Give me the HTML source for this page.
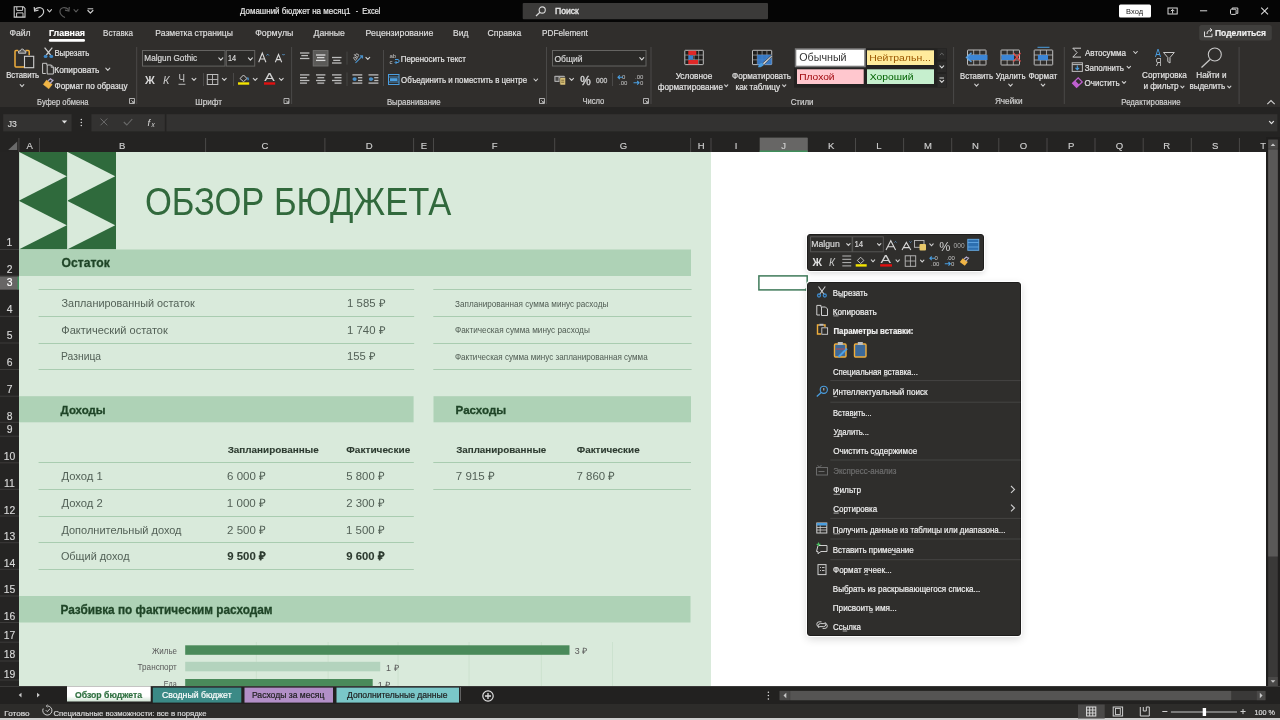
<!DOCTYPE html>
<html><head><meta charset="utf-8"><title>Excel</title>
<style>
*{margin:0;padding:0;box-sizing:border-box}
html,body{width:1280px;height:720px;overflow:hidden;background:#2f2e2d;font-family:"Liberation Sans",sans-serif}
.a{position:absolute}
svg.txt,svg.ic{position:absolute;left:0;top:0}
svg.txt,svg.ic{will-change:transform}
svg text{font-family:"Liberation Sans",sans-serif}
</style></head><body>
<div class="a" style="left:0;top:0;width:1280px;height:22px;background:#050505"></div>
<div class="a" style="left:0;top:22px;width:1280px;height:85px;background:#302e2c"></div>
<div class="a" style="left:0;top:107px;width:1280px;height:30px;background:#242322"></div>
<div class="a" style="left:0;top:137px;width:1280px;height:15px;background:#242322"></div>
<div class="a" style="left:0;top:152px;width:19px;height:534px;background:#252423"></div>
<div class="a" style="left:19px;top:152px;width:1247px;height:534px;background:#ffffff"></div>
<div class="a" style="left:19px;top:152px;width:692px;height:534px;background:#d9eadb"></div>
<div class="a" style="left:1266px;top:137px;width:14px;height:549px;background:#1f1e1d"></div>
<div class="a" style="left:0;top:686px;width:1280px;height:18px;background:#222120;border-top:1px solid #3a3938"></div>
<div class="a" style="left:0;top:704px;width:1280px;height:14px;background:#2d2c2a"></div>
<div class="a" style="left:0;top:718px;width:1280px;height:2px;background:#cfcfcf"></div>
<svg class="ic" width="1280" height="720" viewBox="0 0 1280 720">
<path d="M14.2,6.8 h9.2 l1.6,1.6 v8.7 h-10.8 z" stroke="#cdcdcd" fill="none" stroke-width="1.1" />
<path d="M16.8,6.8 v3.6 h5.8 v-3.6" stroke="#cdcdcd" fill="none" stroke-width="1" />
<path d="M16.6,17.1 v-4.2 h6.4 v4.2" stroke="#cdcdcd" fill="none" stroke-width="1" />
<path d="M35,9.5 C38,6.5 44,7 43.6,12.2 C43.3,15 40.5,16.5 38.5,17.5" stroke="#cdcdcd" fill="none" stroke-width="1.2" />
<path d="M34.2,7 L34.6,11 L38.5,10.2" stroke="#cdcdcd" fill="none" stroke-width="1.2" />
<path d="M47.5,9.700000000000001 L49.5,11.9 L51.5,9.700000000000001" stroke="#cdcdcd" fill="none" stroke-width="1.1" stroke-linecap="round" stroke-linejoin="round"/>
<path d="M68.5,9.5 C65.5,6.5 59.5,7 60,12.2 C60.3,15 63,16.5 65,17.5" stroke="#5a5a5a" fill="none" stroke-width="1.2" />
<path d="M69.3,7 L68.9,11 L65,10.2" stroke="#5a5a5a" fill="none" stroke-width="1.2" />
<path d="M74.0,9.700000000000001 L76,11.9 L78.0,9.700000000000001" stroke="#5a5a5a" fill="none" stroke-width="1.1" stroke-linecap="round" stroke-linejoin="round"/>
<line x1="87.6" y1="8.8" x2="93.2" y2="8.8" stroke="#cdcdcd" stroke-width="1" />
<path d="M87.9,10.5 L90.4,13.100000000000001 L92.9,10.5" stroke="#cdcdcd" fill="none" stroke-width="1.2" stroke-linecap="round" stroke-linejoin="round"/>
<rect x="522.7" y="3" width="245.3" height="16.3" fill="#3b3a39" rx="1"/>
<circle cx="542.2" cy="10" r="3.1" stroke="#d8d8d8" stroke-width="1.1" fill="none"/>
<line x1="540" y1="12.3" x2="536" y2="16" stroke="#d8d8d8" stroke-width="1.2" />
<rect x="1119" y="4.5" width="32" height="13.1" fill="#ffffff" rx="1.5"/>
<rect x="1168" y="8" width="9.2" height="6" fill="none" stroke="#d8d8d8" stroke-width="1"/>
<path d="M1172.6,13.5 v-3.8 M1170.8,11.2 l1.8,-1.8 l1.8,1.8" stroke="#d8d8d8" fill="none" stroke-width="1" />
<line x1="1200" y1="10.8" x2="1207.2" y2="10.8" stroke="#d8d8d8" stroke-width="1" />
<rect x="1230.5" y="9.2" width="5.6" height="5.2" fill="none" stroke="#d8d8d8" stroke-width="1" rx="1"/>
<path d="M1232.2,9 v-1 h5.6 v5.4 h-1.4" stroke="#d8d8d8" fill="none" stroke-width="1" />
<path d="M1261.2,7.7 L1268,14.3 M1268,7.7 L1261.2,14.3" stroke="#d8d8d8" fill="none" stroke-width="1.1" />
<rect x="48.8" y="39.1" width="36.2" height="2.6" fill="#ffffff" rx="1.3"/>
<line x1="136.7" y1="47" x2="136.7" y2="104" stroke="#4a4948" stroke-width="1" />
<line x1="291.6" y1="47" x2="291.6" y2="104" stroke="#4a4948" stroke-width="1" />
<line x1="546.5" y1="47" x2="546.5" y2="104" stroke="#4a4948" stroke-width="1" />
<line x1="651" y1="47" x2="651" y2="104" stroke="#4a4948" stroke-width="1" />
<line x1="953.6" y1="47" x2="953.6" y2="104" stroke="#4a4948" stroke-width="1" />
<line x1="1064.3" y1="47" x2="1064.3" y2="104" stroke="#4a4948" stroke-width="1" />
<line x1="1239.1" y1="47" x2="1239.1" y2="104" stroke="#4a4948" stroke-width="1" />
<line x1="203.5" y1="73" x2="203.5" y2="86" stroke="#4a4948" stroke-width="1" />
<line x1="233.5" y1="73" x2="233.5" y2="86" stroke="#4a4948" stroke-width="1" />
<line x1="383.5" y1="50" x2="383.5" y2="86" stroke="#4a4948" stroke-width="1" />
<line x1="612.5" y1="73" x2="612.5" y2="86" stroke="#4a4948" stroke-width="1" />
<path d="M129.5,98.5 h5 v5 h-5 z" stroke="#bdbdbd" fill="none" stroke-width="0.9" />
<path d="M131.3,100.3 l2.6,2.6 M133.9,100.8 v2.1 h-2.1" stroke="#bdbdbd" fill="none" stroke-width="0.9" />
<path d="M284,98.5 h5 v5 h-5 z" stroke="#bdbdbd" fill="none" stroke-width="0.9" />
<path d="M285.8,100.3 l2.6,2.6 M288.4,100.8 v2.1 h-2.1" stroke="#bdbdbd" fill="none" stroke-width="0.9" />
<path d="M539.5,98.5 h5 v5 h-5 z" stroke="#bdbdbd" fill="none" stroke-width="0.9" />
<path d="M541.3,100.3 l2.6,2.6 M543.9,100.8 v2.1 h-2.1" stroke="#bdbdbd" fill="none" stroke-width="0.9" />
<path d="M643.5,98.5 h5 v5 h-5 z" stroke="#bdbdbd" fill="none" stroke-width="0.9" />
<path d="M645.3,100.3 l2.6,2.6 M647.9,100.8 v2.1 h-2.1" stroke="#bdbdbd" fill="none" stroke-width="0.9" />
<rect x="1199.2" y="25" width="72.6" height="15.6" fill="#403f3d" rx="2.5"/>
<path d="M1204.5,31.5 v5.2 h7.5 v-3" stroke="#e0e0e0" fill="none" stroke-width="1" />
<path d="M1207,34 C1207,31 1209,30 1211.5,30 M1210,28.3 l2,1.7 l-2,1.8" stroke="#e0e0e0" fill="none" stroke-width="1" />
<path d="M1267.3,104.2 L1271,100.5 L1274.7,104.2" stroke="#d0d0d0" fill="none" stroke-width="1.1" />
<path d="M18.2,50.6 h-2.2 a1,1 0 0,0 -1,1 v14.3 a1,1 0 0,0 1,1 h8.4" stroke="#f0ae3c" fill="none" stroke-width="1.5" />
<path d="M25.6,50.6 h2.6 a1,1 0 0,1 1,1 v3.6" stroke="#f0ae3c" fill="none" stroke-width="1.5" />
<path d="M18.6,53.2 v-2.2 h1.8 C20.6,48.4 24,48.4 24.2,51 h1.6 v2.2 z" stroke="#c8c8c8" fill="#5a5958" stroke-width="1" />
<rect x="24.5" y="56.3" width="9.2" height="11.4" fill="#2a2928" stroke="#cfcfcf" stroke-width="1.1"/>
<path d="M20.2,84.6 L22,86.6 L23.8,84.6" stroke="#cdcdcd" fill="none" stroke-width="1.1" stroke-linecap="round" stroke-linejoin="round"/>
<path d="M44.6,47.6 L50.6,55 M52.3,47.6 L46.3,55" stroke="#cfcfcf" fill="none" stroke-width="1.2" />
<ellipse cx="45.6" cy="56.4" rx="1.9" ry="1.6" fill="#3c86c6"/>
<ellipse cx="51.3" cy="56.4" rx="1.9" ry="1.6" fill="#3c86c6"/>
<path d="M45.8,73.5 h-3.2 v-10.2 h4.2 v1.8" stroke="#c8c8c8" fill="none" stroke-width="1" />
<path d="M47.2,65 h4.2 l2,2 v7 h-6.2 z" stroke="#c8c8c8" fill="none" stroke-width="1" />
<path d="M51.2,65 v2.3 h2.2" stroke="#c8c8c8" fill="none" stroke-width="0.9" />
<path d="M105.8,68.2 L107.8,70.39999999999999 L109.8,68.2" stroke="#cdcdcd" fill="none" stroke-width="1.1" stroke-linecap="round" stroke-linejoin="round"/>
<path d="M43.3,84.5 l5.5,4.3 l3.4,-4.3 l-5.6,-4.4 z" stroke="#f0b545" fill="#f0b545" stroke-width="0.5" />
<path d="M48,80.8 l2.5,-2 l1.8,1.4 M50,83.5 l3.4,-3.6" stroke="#b8b0d0" fill="none" stroke-width="1.2" />
<rect x="142.5" y="50.5" width="82.5" height="15.6" fill="#2b2a28" stroke="#656462" stroke-width="1"/>
<path d="M218.8,57.9 L220.8,60.1 L222.8,57.9" stroke="#d8d8d8" fill="none" stroke-width="1.1" stroke-linecap="round" stroke-linejoin="round"/>
<rect x="226.3" y="50.5" width="28.4" height="15.6" fill="#2b2a28" stroke="#656462" stroke-width="1"/>
<path d="M248.4,57.9 L250.4,60.1 L252.4,57.9" stroke="#d8d8d8" fill="none" stroke-width="1.1" stroke-linecap="round" stroke-linejoin="round"/>
<path d="M258.7,62.2 L262.3,53 L265.9,62.2 M260,59 h4.6" stroke="#d8d8d8" fill="none" stroke-width="1.1" />
<path d="M266.5,55.5 l1.2,-1.3 l1.2,1.3" stroke="#5a9fd8" fill="none" stroke-width="0.9" />
<path d="M275.3,62.2 L278.5,54.5 L281.7,62.2 M276.5,59.6 h4" stroke="#d8d8d8" fill="none" stroke-width="1.1" />
<path d="M282.4,54 l1.1,1.2 l1.1,-1.2" stroke="#5a9fd8" fill="none" stroke-width="0.9" />
<path d="M192.1,78.3 L194,80.3 L195.9,78.3" stroke="#d0d0d0" fill="none" stroke-width="1.1" stroke-linecap="round" stroke-linejoin="round"/>
<rect x="207.3" y="74.5" width="10.5" height="10" fill="none" stroke="#bdbdbd" stroke-width="1"/>
<line x1="212.5" y1="74.5" x2="212.5" y2="84.5" stroke="#bdbdbd" stroke-width="0.9" />
<line x1="207.3" y1="79.5" x2="217.8" y2="79.5" stroke="#bdbdbd" stroke-width="0.9" />
<path d="M222.4,78.3 L224.3,80.3 L226.20000000000002,78.3" stroke="#d0d0d0" fill="none" stroke-width="1.1" stroke-linecap="round" stroke-linejoin="round"/>
<path d="M240,78.5 l3.5,-3.5 l3.5,3.5 l-3.5,3.2 z" stroke="#d0d0d0" fill="none" stroke-width="1" />
<path d="M247.5,77.5 c1,1.2 1,2.3 0,2.5" stroke="#4a9ee0" fill="none" stroke-width="1.2" />
<rect x="238" y="82.3" width="11.2" height="2.4" fill="#f4e400" />
<path d="M253.29999999999998,78.3 L255.2,80.3 L257.09999999999997,78.3" stroke="#d0d0d0" fill="none" stroke-width="1.1" stroke-linecap="round" stroke-linejoin="round"/>
<rect x="264" y="82.3" width="11.2" height="2.4" fill="#e01010" />
<path d="M279.40000000000003,78.3 L281.3,80.3 L283.2,78.3" stroke="#d0d0d0" fill="none" stroke-width="1.1" stroke-linecap="round" stroke-linejoin="round"/>
<line x1="300" y1="53" x2="309.4" y2="53" stroke="#bdbdbd" stroke-width="1.3" />
<line x1="301.3" y1="55.6" x2="308" y2="55.6" stroke="#bdbdbd" stroke-width="1.3" />
<line x1="300" y1="58.5" x2="309.4" y2="58.5" stroke="#bdbdbd" stroke-width="1.3" />
<rect x="313.2" y="50.6" width="14.8" height="15.4" fill="#5b5a58" stroke="#727170" stroke-width="0.9"/>
<line x1="316" y1="55" x2="325.4" y2="55" stroke="#d8d8d8" stroke-width="1.3" />
<line x1="317" y1="57.6" x2="324.4" y2="57.6" stroke="#d8d8d8" stroke-width="1.3" />
<line x1="316" y1="60.4" x2="325.4" y2="60.4" stroke="#d8d8d8" stroke-width="1.3" />
<line x1="332" y1="57.5" x2="341.5" y2="57.5" stroke="#bdbdbd" stroke-width="1.3" />
<line x1="333.2" y1="60.4" x2="340.3" y2="60.4" stroke="#bdbdbd" stroke-width="1.3" />
<line x1="332" y1="63" x2="341.5" y2="63" stroke="#bdbdbd" stroke-width="1.3" />
<line x1="347" y1="51.6" x2="347" y2="64.7" stroke="#454443" stroke-width="1" />
<line x1="347" y1="72.4" x2="347" y2="86" stroke="#454443" stroke-width="1" />
<text x="352.5" y="59.5" font-size="6.8" fill="#d0d0d0" transform="rotate(-55 355.5 57.5)">ab</text>
<path d="M355.5,62.8 L362.5,55.8 M359.8,55.8 h2.7 v2.7" stroke="#4a90c8" fill="none" stroke-width="1.2" />
<path d="M365.90000000000003,57.4 L367.8,59.4 L369.7,57.4" stroke="#d0d0d0" fill="none" stroke-width="1.1" stroke-linecap="round" stroke-linejoin="round"/>
<line x1="300" y1="74.9" x2="309.4" y2="74.9" stroke="#bdbdbd" stroke-width="1.3" />
<line x1="300" y1="77.7" x2="307" y2="77.7" stroke="#bdbdbd" stroke-width="1.3" />
<line x1="300" y1="80.5" x2="309.4" y2="80.5" stroke="#bdbdbd" stroke-width="1.3" />
<line x1="300" y1="83.1" x2="307" y2="83.1" stroke="#bdbdbd" stroke-width="1.3" />
<line x1="316" y1="74.9" x2="325.4" y2="74.9" stroke="#bdbdbd" stroke-width="1.3" />
<line x1="317.3" y1="77.7" x2="324.2" y2="77.7" stroke="#bdbdbd" stroke-width="1.3" />
<line x1="316" y1="80.5" x2="325.4" y2="80.5" stroke="#bdbdbd" stroke-width="1.3" />
<line x1="317.3" y1="83.1" x2="324.2" y2="83.1" stroke="#bdbdbd" stroke-width="1.3" />
<line x1="332" y1="74.9" x2="341.5" y2="74.9" stroke="#bdbdbd" stroke-width="1.3" />
<line x1="334.5" y1="77.7" x2="341.5" y2="77.7" stroke="#bdbdbd" stroke-width="1.3" />
<line x1="332" y1="80.5" x2="341.5" y2="80.5" stroke="#bdbdbd" stroke-width="1.3" />
<line x1="334.5" y1="83.1" x2="341.5" y2="83.1" stroke="#bdbdbd" stroke-width="1.3" />
<line x1="352.4" y1="74.9" x2="362.3" y2="74.9" stroke="#bdbdbd" stroke-width="1.3" />
<line x1="358" y1="77.7" x2="362.3" y2="77.7" stroke="#bdbdbd" stroke-width="1.3" />
<line x1="358" y1="80.5" x2="362.3" y2="80.5" stroke="#bdbdbd" stroke-width="1.3" />
<line x1="352.4" y1="83.1" x2="362.3" y2="83.1" stroke="#bdbdbd" stroke-width="1.3" />
<circle cx="354.8" cy="79.1" r="1.9" fill="#4a90c8"/>
<path d="M352.2,79.1 l2,-1.8 v3.6 z" stroke="none" fill="#4a90c8" stroke-width="1" />
<line x1="368.5" y1="74.9" x2="378.4" y2="74.9" stroke="#bdbdbd" stroke-width="1.3" />
<line x1="374.2" y1="77.7" x2="378.4" y2="77.7" stroke="#bdbdbd" stroke-width="1.3" />
<line x1="374.2" y1="80.5" x2="378.4" y2="80.5" stroke="#bdbdbd" stroke-width="1.3" />
<line x1="368.5" y1="83.1" x2="378.4" y2="83.1" stroke="#bdbdbd" stroke-width="1.3" />
<circle cx="370.8" cy="79.1" r="1.9" fill="#4a90c8"/>
<path d="M373.6,79.1 l-2,-1.8 v3.6 z" stroke="none" fill="#4a90c8" stroke-width="1" />
<text x="389.5" y="58" font-size="6" fill="#c8c8c8">ab</text>
<text x="389.5" y="63.5" font-size="6" fill="#c8c8c8">c</text>
<path d="M395,59.5 h3 c1.5,0 1.5,3 0,3 h-2.5 M396.5,61 l-1.5,1.5 l1.5,1.5" stroke="#4a9ee0" fill="none" stroke-width="1" />
<rect x="388.5" y="74.5" width="10.5" height="10" fill="none" stroke="#4a9ee0" stroke-width="1"/>
<line x1="388.5" y1="77" x2="399" y2="77" stroke="#4a9ee0" stroke-width="0.8" />
<line x1="388.5" y1="82" x2="399" y2="82" stroke="#4a9ee0" stroke-width="0.8" />
<rect x="390" y="78.2" width="7.5" height="2.8" fill="#4a9ee0" />
<path d="M534.0,79.0 L535.8,81.0 L537.5999999999999,79.0" stroke="#d0d0d0" fill="none" stroke-width="1.1" stroke-linecap="round" stroke-linejoin="round"/>
<rect x="552.5" y="50.5" width="93.5" height="15.5" fill="#2b2a28" stroke="#656462" stroke-width="1"/>
<path d="M639.8,57.699999999999996 L641.8,59.9 L643.8,57.699999999999996" stroke="#d8d8d8" fill="none" stroke-width="1.1" stroke-linecap="round" stroke-linejoin="round"/>
<rect x="554.3" y="75.8" width="10.5" height="6.2" fill="#a8a8a8" rx="0.8"/>
<rect x="555.5" y="77" width="3" height="3.8" fill="#4a4948" />
<rect x="559.8" y="77.5" width="5.8" height="7.6" fill="#d8c078" stroke="#302e2c" stroke-width="0.6" rx="1"/>
<line x1="561.2" y1="80.2" x2="564.2" y2="80.2" stroke="#5a4a20" stroke-width="0.7" />
<line x1="561.2" y1="82.2" x2="564.2" y2="82.2" stroke="#5a4a20" stroke-width="0.7" />
<path d="M569.7,78.3 L571.6,80.3 L573.5,78.3" stroke="#d0d0d0" fill="none" stroke-width="1.1" stroke-linecap="round" stroke-linejoin="round"/>
<text x="580.3" y="84.6" font-size="12.5" fill="#c8c8c8" stroke="#c8c8c8" stroke-width="0.5" textLength="10.5" lengthAdjust="spacingAndGlyphs">%</text>
<text x="596" y="82.6" font-size="8" fill="#b8b8b8" stroke="#b8b8b8" stroke-width="0.45" textLength="11.3" lengthAdjust="spacingAndGlyphs">000</text>
<text x="622" y="79" font-size="6" fill="#c8c8c8">0</text><text x="619" y="84.6" font-size="6" fill="#c8c8c8">.00</text>
<path d="M623,77.2 h-5 M619.8,75.4 l-1.8,1.8 l1.8,1.8" stroke="#4a9ee0" fill="none" stroke-width="1.1" />
<text x="635" y="79" font-size="6" fill="#c8c8c8">.00</text><text x="640" y="84.6" font-size="6" fill="#c8c8c8">0</text>
<path d="M633.5,82.8 h5.5 M637.2,81 l1.8,1.8 l-1.8,1.8" stroke="#4a9ee0" fill="none" stroke-width="1.1" />
<rect x="684.8" y="50.3" width="18.5" height="14.3" fill="#1e1d1c" stroke="#bdbdbd" stroke-width="1" rx="0.5"/>
<line x1="689.42" y1="50.3" x2="689.42" y2="64.6" stroke="#a8a8a8" stroke-width="0.7" />
<line x1="694.04" y1="50.3" x2="694.04" y2="64.6" stroke="#a8a8a8" stroke-width="0.7" />
<line x1="698.66" y1="50.3" x2="698.66" y2="64.6" stroke="#a8a8a8" stroke-width="0.7" />
<line x1="684.8" y1="55.06999999999999" x2="703.3" y2="55.06999999999999" stroke="#a8a8a8" stroke-width="0.7" />
<line x1="684.8" y1="59.839999999999996" x2="703.3" y2="59.839999999999996" stroke="#a8a8a8" stroke-width="0.7" />
<rect x="688.3" y="50.8" width="8" height="4.3" fill="#e02828" />
<rect x="688.3" y="55.4" width="4.7" height="4.3" fill="#3a80d0" />
<rect x="688.3" y="60" width="9.7" height="4.2" fill="#e02828" />
<rect x="752.5" y="50.3" width="19.2" height="14.3" fill="#1e1d1c" stroke="#bdbdbd" stroke-width="1" rx="0.5"/>
<line x1="757.3" y1="50.3" x2="757.3" y2="64.6" stroke="#a8a8a8" stroke-width="0.7" />
<line x1="762.1" y1="50.3" x2="762.1" y2="64.6" stroke="#a8a8a8" stroke-width="0.7" />
<line x1="766.9" y1="50.3" x2="766.9" y2="64.6" stroke="#a8a8a8" stroke-width="0.7" />
<line x1="752.5" y1="55.06999999999999" x2="771.7" y2="55.06999999999999" stroke="#a8a8a8" stroke-width="0.7" />
<line x1="752.5" y1="59.839999999999996" x2="771.7" y2="59.839999999999996" stroke="#a8a8a8" stroke-width="0.7" />
<rect x="757.3" y="54.8" width="14.4" height="9.8" fill="#3a80d0" opacity="0.92"/>
<path d="M762.5,63.2 L771.5,55.2 l1,1 L764,64.8 z" stroke="#302e2c" fill="#d0d0d0" stroke-width="0.6" />
<path d="M758,67.2 c0.5,-2.5 2,-4.4 4.2,-4.2 l1.6,1.5 c-1,2.2 -3.5,3.2 -5.8,2.7 z" stroke="none" fill="#4a9ee0" stroke-width="1" />
<path d="M724.6,84.89999999999999 L726.2,86.7 L727.8000000000001,84.89999999999999" stroke="#d0d0d0" fill="none" stroke-width="1.1" stroke-linecap="round" stroke-linejoin="round"/>
<path d="M782.6,84.89999999999999 L784.2,86.7 L785.8000000000001,84.89999999999999" stroke="#d0d0d0" fill="none" stroke-width="1.1" stroke-linecap="round" stroke-linejoin="round"/>
<rect x="794" y="48.2" width="152.7" height="39.4" fill="#232221" />
<rect x="795.5" y="49" width="69.5" height="17.5" fill="#ffffff" stroke="#7a7a7a" stroke-width="1.6"/>
<rect x="867" y="50.3" width="67" height="14.7" fill="#ffeb9c" />
<rect x="797" y="69.3" width="66.7" height="14.7" fill="#ffc7ce" />
<rect x="867" y="69.3" width="67" height="14.7" fill="#c6efce" />
<rect x="937.5" y="48.5" width="8.5" height="11" fill="#2b2a29" />
<rect x="937.5" y="61.6" width="8.5" height="10.4" fill="#2b2a29" />
<rect x="937.5" y="74" width="8.5" height="13" fill="#2b2a29" />
<path d="M939.8,55 l2,-1.8 l2,1.8" stroke="#6a6a6a" fill="none" stroke-width="1" />
<path d="M939.9,65.8 L941.8,67.8 L943.6999999999999,65.8" stroke="#d8d8d8" fill="none" stroke-width="1.1" stroke-linecap="round" stroke-linejoin="round"/>
<line x1="939.5" y1="78" x2="944" y2="78" stroke="#d8d8d8" stroke-width="1" />
<path d="M939.9,80.3 L941.8,82.3 L943.6999999999999,80.3" stroke="#d8d8d8" fill="none" stroke-width="1.1" stroke-linecap="round" stroke-linejoin="round"/>
<rect x="967.5" y="50" width="18.5" height="15" fill="none" stroke="#bdbdbd" stroke-width="1" rx="0.5"/>
<line x1="973.6666666666666" y1="50" x2="973.6666666666666" y2="65" stroke="#bdbdbd" stroke-width="0.8" />
<line x1="979.8333333333334" y1="50" x2="979.8333333333334" y2="65" stroke="#bdbdbd" stroke-width="0.8" />
<line x1="967.5" y1="55.0" x2="986.0" y2="55.0" stroke="#bdbdbd" stroke-width="0.8" />
<line x1="967.5" y1="60.0" x2="986.0" y2="60.0" stroke="#bdbdbd" stroke-width="0.8" />
<rect x="968" y="54.8" width="19.5" height="5.2" fill="#3c86d6" />
<path d="M971.5,52.8 l-5,4.6 l5,4.6" stroke="#5aa0e0" fill="none" stroke-width="1.4" />
<rect x="1001" y="50" width="18.5" height="15" fill="none" stroke="#bdbdbd" stroke-width="1" rx="0.5"/>
<line x1="1007.1666666666666" y1="50" x2="1007.1666666666666" y2="65" stroke="#bdbdbd" stroke-width="0.8" />
<line x1="1013.3333333333334" y1="50" x2="1013.3333333333334" y2="65" stroke="#bdbdbd" stroke-width="0.8" />
<line x1="1001" y1="55.0" x2="1019.5" y2="55.0" stroke="#bdbdbd" stroke-width="0.8" />
<line x1="1001" y1="60.0" x2="1019.5" y2="60.0" stroke="#bdbdbd" stroke-width="0.8" />
<rect x="1001.5" y="54.8" width="12.5" height="5.2" fill="#3c86d6" />
<path d="M1013.5,53 L1020.5,61.5 M1020.5,53 L1013.5,61.5" stroke="#e04848" fill="none" stroke-width="1.2" />
<rect x="1034.2" y="50" width="18.5" height="15" fill="none" stroke="#bdbdbd" stroke-width="1" rx="0.5"/>
<line x1="1040.3666666666668" y1="50" x2="1040.3666666666668" y2="65" stroke="#bdbdbd" stroke-width="0.8" />
<line x1="1046.5333333333333" y1="50" x2="1046.5333333333333" y2="65" stroke="#bdbdbd" stroke-width="0.8" />
<line x1="1034.2" y1="55.0" x2="1052.7" y2="55.0" stroke="#bdbdbd" stroke-width="0.8" />
<line x1="1034.2" y1="60.0" x2="1052.7" y2="60.0" stroke="#bdbdbd" stroke-width="0.8" />
<rect x="1037.9" y="55" width="10.1" height="5.2" fill="#3c86d6" />
<line x1="1037.5" y1="47.3" x2="1049.5" y2="47.3" stroke="#4a9ee0" stroke-width="1" />
<path d="M974.7,84.2 L976.5,86.2 L978.3,84.2" stroke="#d0d0d0" fill="none" stroke-width="1.1" stroke-linecap="round" stroke-linejoin="round"/>
<path d="M1008.7,84.2 L1010.5,86.2 L1012.3,84.2" stroke="#d0d0d0" fill="none" stroke-width="1.1" stroke-linecap="round" stroke-linejoin="round"/>
<path d="M1041.2,84.2 L1043,86.2 L1044.8,84.2" stroke="#d0d0d0" fill="none" stroke-width="1.1" stroke-linecap="round" stroke-linejoin="round"/>
<path d="M1081,48.2 h-8.2 l4.3,4.4 l-4.3,4.5 h8.2" stroke="#d0d0d0" fill="none" stroke-width="1" />
<path d="M1133.7,51.5 L1135.5,53.5 L1137.3,51.5" stroke="#d0d0d0" fill="none" stroke-width="1.1" stroke-linecap="round" stroke-linejoin="round"/>
<rect x="1072.2" y="62.8" width="10.2" height="8.6" fill="none" stroke="#bdbdbd" stroke-width="1"/>
<line x1="1072.2" y1="64.6" x2="1082.4" y2="64.6" stroke="#bdbdbd" stroke-width="1" />
<path d="M1077.3,65.5 v4 M1075.5,67.8 l1.8,1.8 l1.8,-1.8" stroke="#4a9ee0" fill="none" stroke-width="1.1" />
<path d="M1127.1,66.35 L1128.8,68.25 L1130.5,66.35" stroke="#d0d0d0" fill="none" stroke-width="1.1" stroke-linecap="round" stroke-linejoin="round"/>
<path d="M1072.6,83.3 l5.6,-5.4 l4,4 l-5.6,5.4 z" stroke="#c060d0" fill="#302e2c" stroke-width="1.3" />
<path d="M1072.6,83.3 l2.7,-2.6 l4,4 l-2.7,2.6 z" stroke="none" fill="#c060d0" stroke-width="1" />
<path d="M1122.3,81.55 L1124,83.45 L1125.7,81.55" stroke="#d0d0d0" fill="none" stroke-width="1.1" stroke-linecap="round" stroke-linejoin="round"/>
<text x="1155" y="56.6" font-size="11" fill="#4a9ee0" textLength="6" lengthAdjust="spacingAndGlyphs">A</text><text x="1155.4" y="66" font-size="11" fill="#c8c8c8" textLength="6" lengthAdjust="spacingAndGlyphs">Я</text>
<path d="M1163.5,52.5 h10.8 l-4.3,5 v5.5 l-2.2,-1.5 v-4 z" stroke="#c8c8c8" fill="none" stroke-width="1" />
<path d="M1180.8000000000002,86.1 L1182.4,87.9 L1184.0,86.1" stroke="#d0d0d0" fill="none" stroke-width="1.1" stroke-linecap="round" stroke-linejoin="round"/>
<circle cx="1214.8" cy="54.5" r="6.5" stroke="#c8c8c8" stroke-width="1.1" fill="none"/>
<line x1="1210" y1="59.5" x2="1201.5" y2="67.5" stroke="#c8c8c8" stroke-width="1.2" />
<path d="M1227.7,86.1 L1229.3,87.9 L1230.8999999999999,86.1" stroke="#d0d0d0" fill="none" stroke-width="1.1" stroke-linecap="round" stroke-linejoin="round"/>
<rect x="3.2" y="114.2" width="68.4" height="17.2" fill="#333231" />
<path d="M61.7,120.5 h5.5 l-2.75,3 z" stroke="none" fill="#e0e0e0" stroke-width="1" />
<circle cx="81.3" cy="119.5" r="0.75" fill="#d8d8d8"/>
<circle cx="81.3" cy="122.5" r="0.75" fill="#d8d8d8"/>
<circle cx="81.3" cy="125.5" r="0.75" fill="#d8d8d8"/>
<rect x="91.4" y="114.2" width="73.4" height="17.2" fill="#333231" />
<path d="M100.5,118.5 l6.8,6.8 M107.3,118.5 l-6.8,6.8" stroke="#6a6a6a" fill="none" stroke-width="1" />
<path d="M123.8,122 l3,3 l5.5,-6" stroke="#6a6a6a" fill="none" stroke-width="1.1" />
<text x="147.5" y="126" font-size="9.5" font-style="italic" fill="#d8d8d8" font-family="Liberation Serif">f</text><text x="151.5" y="126.5" font-size="6.5" font-style="italic" fill="#d8d8d8" font-family="Liberation Serif">x</text>
<rect x="166.4" y="114.2" width="1111" height="17.2" fill="#333231" />
<path d="M1269.5,121.4 L1271.5,123.6 L1273.5,121.4" stroke="#e0e0e0" fill="none" stroke-width="1.2" stroke-linecap="round" stroke-linejoin="round"/>
<text x="145" y="83.6" font-size="11.5" font-weight="bold" fill="#d8d8d8" textLength="9.8" lengthAdjust="spacingAndGlyphs">Ж</text>
<text x="163" y="83.6" font-size="11" font-style="italic" fill="#c8c8c8" textLength="6.5" lengthAdjust="spacingAndGlyphs">К</text>
<text x="178.6" y="82.3" font-size="10.5" fill="#c8c8c8" textLength="6.5" lengthAdjust="spacingAndGlyphs">Ч</text>
<line x1="178.5" y1="84.3" x2="185.4" y2="84.3" stroke="#c8c8c8" stroke-width="0.9" />
<text x="264.3" y="81.2" font-size="11" fill="#d0d0d0" textLength="10.5" lengthAdjust="spacingAndGlyphs">A</text>
<path d="M17.2,141.5 L17.2,150 L8.2,150 Z" stroke="none" fill="#6a6a6a" stroke-width="1" />
<line x1="18.9" y1="138" x2="18.9" y2="152" stroke="#4a4948" stroke-width="1" />
<line x1="39.5" y1="138" x2="39.5" y2="152" stroke="#4a4948" stroke-width="1" />
<line x1="205.6" y1="138" x2="205.6" y2="152" stroke="#4a4948" stroke-width="1" />
<line x1="324.9" y1="138" x2="324.9" y2="152" stroke="#4a4948" stroke-width="1" />
<line x1="413.6" y1="138" x2="413.6" y2="152" stroke="#4a4948" stroke-width="1" />
<line x1="433.5" y1="138" x2="433.5" y2="152" stroke="#4a4948" stroke-width="1" />
<line x1="554.7" y1="138" x2="554.7" y2="152" stroke="#4a4948" stroke-width="1" />
<line x1="690.6" y1="138" x2="690.6" y2="152" stroke="#4a4948" stroke-width="1" />
<line x1="711" y1="138" x2="711" y2="152" stroke="#4a4948" stroke-width="1" />
<line x1="807.5" y1="138" x2="807.5" y2="152" stroke="#4a4948" stroke-width="1" />
<line x1="855.5" y1="138" x2="855.5" y2="152" stroke="#4a4948" stroke-width="1" />
<line x1="903.6" y1="138" x2="903.6" y2="152" stroke="#4a4948" stroke-width="1" />
<line x1="951.7" y1="138" x2="951.7" y2="152" stroke="#4a4948" stroke-width="1" />
<line x1="998.8" y1="138" x2="998.8" y2="152" stroke="#4a4948" stroke-width="1" />
<line x1="1047" y1="138" x2="1047" y2="152" stroke="#4a4948" stroke-width="1" />
<line x1="1095" y1="138" x2="1095" y2="152" stroke="#4a4948" stroke-width="1" />
<line x1="1143.2" y1="138" x2="1143.2" y2="152" stroke="#4a4948" stroke-width="1" />
<line x1="1191.3" y1="138" x2="1191.3" y2="152" stroke="#4a4948" stroke-width="1" />
<line x1="1239.4" y1="138" x2="1239.4" y2="152" stroke="#4a4948" stroke-width="1" />
<rect x="759.7" y="137.6" width="47.8" height="14.4" fill="#676665" />
<rect x="759.7" y="150.5" width="47.8" height="1.5" fill="#3e8e5a" />
<line x1="0" y1="249.5" x2="19" y2="249.5" stroke="#3c3b3a" stroke-width="1" />
<line x1="0" y1="276" x2="19" y2="276" stroke="#3c3b3a" stroke-width="1" />
<line x1="0" y1="289.5" x2="19" y2="289.5" stroke="#3c3b3a" stroke-width="1" />
<line x1="0" y1="316.3" x2="19" y2="316.3" stroke="#3c3b3a" stroke-width="1" />
<line x1="0" y1="343" x2="19" y2="343" stroke="#3c3b3a" stroke-width="1" />
<line x1="0" y1="369.5" x2="19" y2="369.5" stroke="#3c3b3a" stroke-width="1" />
<line x1="0" y1="396.2" x2="19" y2="396.2" stroke="#3c3b3a" stroke-width="1" />
<line x1="0" y1="422.3" x2="19" y2="422.3" stroke="#3c3b3a" stroke-width="1" />
<line x1="0" y1="436.2" x2="19" y2="436.2" stroke="#3c3b3a" stroke-width="1" />
<line x1="0" y1="462.8" x2="19" y2="462.8" stroke="#3c3b3a" stroke-width="1" />
<line x1="0" y1="489.3" x2="19" y2="489.3" stroke="#3c3b3a" stroke-width="1" />
<line x1="0" y1="516" x2="19" y2="516" stroke="#3c3b3a" stroke-width="1" />
<line x1="0" y1="542.7" x2="19" y2="542.7" stroke="#3c3b3a" stroke-width="1" />
<line x1="0" y1="569.3" x2="19" y2="569.3" stroke="#3c3b3a" stroke-width="1" />
<line x1="0" y1="596" x2="19" y2="596" stroke="#3c3b3a" stroke-width="1" />
<line x1="0" y1="622.5" x2="19" y2="622.5" stroke="#3c3b3a" stroke-width="1" />
<line x1="0" y1="642.2" x2="19" y2="642.2" stroke="#3c3b3a" stroke-width="1" />
<line x1="0" y1="661" x2="19" y2="661" stroke="#3c3b3a" stroke-width="1" />
<line x1="0" y1="680" x2="19" y2="680" stroke="#3c3b3a" stroke-width="1" />
<rect x="0" y="276.5" width="18.5" height="13" fill="#676665" />
<rect x="17.5" y="276.5" width="1.5" height="13" fill="#3e8e5a" />
<rect x="19.2" y="152" width="96.8" height="97.3" fill="#2f6a3c" />
<path d="M19.2,152 L66.8,176.3 L19.2,200.6 Z" stroke="none" fill="#d9eadb" stroke-width="1" />
<path d="M19.2,201 L66.8,225.2 L19.2,249.3 Z" stroke="none" fill="#d9eadb" stroke-width="1" />
<path d="M67.6,152 L115.2,176.3 L67.6,200.6 Z" stroke="none" fill="#d9eadb" stroke-width="1" />
<path d="M67.6,201 L115.2,225.2 L67.6,249.3 Z" stroke="none" fill="#d9eadb" stroke-width="1" />
<line x1="67.5" y1="152" x2="67.5" y2="249.3" stroke="#d9eadb" stroke-width="0.8" />
<rect x="19" y="249.5" width="672" height="26.5" fill="#aed2b6" />
<rect x="19" y="396.2" width="394.6" height="26.1" fill="#aed2b6" />
<rect x="433.5" y="396.2" width="257.5" height="26.1" fill="#aed2b6" />
<rect x="19" y="596" width="671.5" height="26.5" fill="#aed2b6" />
<line x1="38.6" y1="289.5" x2="414.2" y2="289.5" stroke="#a9ccb0" stroke-width="1" />
<line x1="433.3" y1="289.5" x2="691.6" y2="289.5" stroke="#a9ccb0" stroke-width="1" />
<line x1="38.6" y1="316.5" x2="414.2" y2="316.5" stroke="#a9ccb0" stroke-width="1" />
<line x1="433.3" y1="316.5" x2="691.6" y2="316.5" stroke="#a9ccb0" stroke-width="1" />
<line x1="38.6" y1="343.5" x2="414.2" y2="343.5" stroke="#a9ccb0" stroke-width="1" />
<line x1="433.3" y1="343.5" x2="691.6" y2="343.5" stroke="#a9ccb0" stroke-width="1" />
<line x1="38.6" y1="369.5" x2="414.2" y2="369.5" stroke="#a9ccb0" stroke-width="1" />
<line x1="433.3" y1="369.5" x2="691.6" y2="369.5" stroke="#a9ccb0" stroke-width="1" />
<line x1="38.6" y1="462.5" x2="413.8" y2="462.5" stroke="#a9ccb0" stroke-width="1" />
<line x1="38.6" y1="489.5" x2="413.8" y2="489.5" stroke="#a9ccb0" stroke-width="1" />
<line x1="38.6" y1="516.5" x2="413.8" y2="516.5" stroke="#a9ccb0" stroke-width="1" />
<line x1="38.6" y1="542.5" x2="413.8" y2="542.5" stroke="#a9ccb0" stroke-width="1" />
<line x1="38.6" y1="569.5" x2="413.8" y2="569.5" stroke="#a9ccb0" stroke-width="1" />
<line x1="433.3" y1="462.5" x2="691" y2="462.5" stroke="#a9ccb0" stroke-width="1" />
<line x1="433.3" y1="489.5" x2="691" y2="489.5" stroke="#a9ccb0" stroke-width="1" />
<line x1="256.4" y1="642" x2="256.4" y2="686" stroke="#c9dfcc" stroke-width="0.8" />
<line x1="328.1" y1="642" x2="328.1" y2="686" stroke="#c9dfcc" stroke-width="0.8" />
<line x1="398" y1="642" x2="398" y2="686" stroke="#c9dfcc" stroke-width="0.8" />
<line x1="469" y1="642" x2="469" y2="686" stroke="#c9dfcc" stroke-width="0.8" />
<line x1="541.4" y1="642" x2="541.4" y2="686" stroke="#c9dfcc" stroke-width="0.8" />
<line x1="612.5" y1="642" x2="612.5" y2="686" stroke="#c9dfcc" stroke-width="0.8" />
<rect x="185.2" y="645.3" width="384.3" height="9.5" fill="#4a8a5a" />
<rect x="185.2" y="661.8" width="195" height="9.5" fill="#b3d3bd" />
<rect x="185.2" y="679" width="187.5" height="7" fill="#4a8a5a" />
<rect x="758.9" y="275.9" width="48.3" height="14" fill="none" stroke="#3f7a5a" stroke-width="1.5"/>
<rect x="805.5" y="288" width="3" height="3" fill="#3f7a5a" />
<rect x="1268.2" y="139.5" width="9.6" height="546.5" fill="#3a3938" />
<rect x="1268.2" y="139.7" width="9.6" height="9" fill="#4a4948" />
<path d="M1270.6,146 l2.4,-2.6 l2.4,2.6 z" stroke="none" fill="#c8c8c8" stroke-width="1" />
<rect x="1268.2" y="149.5" width="9.6" height="407" fill="#5a5958" />
<rect x="1268.2" y="677" width="9.6" height="9" fill="#4a4948" />
<path d="M1270.6,680.2 l2.4,2.6 l2.4,-2.6 z" stroke="none" fill="#c8c8c8" stroke-width="1" />
<path d="M21.5,692.8 l-2.8,2.3 l2.8,2.3 z" stroke="none" fill="#c8c8c8" stroke-width="1" />
<path d="M37,692.8 l2.8,2.3 l-2.8,2.3 z" stroke="none" fill="#c8c8c8" stroke-width="1" />
<defs><linearGradient id="tg" x1="0" y1="0" x2="0" y2="1"><stop offset="0" stop-color="#ffffff"/><stop offset="0.65" stop-color="#ffffff"/><stop offset="1" stop-color="#cfe3d3"/></linearGradient></defs>
<rect x="67" y="686.3" width="83.7" height="15.2" fill="url(#tg)" />
<rect x="152.8" y="687.6" width="88.5" height="15" fill="#3b8a86" />
<rect x="244.5" y="687.6" width="88.5" height="15" fill="#b28fc7" />
<rect x="336.5" y="687.6" width="122.5" height="15" fill="#7ac7c8" />
<line x1="460.4" y1="687" x2="460.4" y2="701" stroke="#6a6a6a" stroke-width="1" />
<circle cx="488" cy="696" r="5.2" fill="none" stroke="#e0e0e0" stroke-width="1.2"/>
<path d="M485,696 h6 M488,693 v6" stroke="#e0e0e0" fill="none" stroke-width="1.3" />
<circle cx="768.4" cy="692.2" r="0.75" fill="#e0e0e0"/>
<circle cx="768.4" cy="695.6" r="0.75" fill="#e0e0e0"/>
<circle cx="768.4" cy="699" r="0.75" fill="#e0e0e0"/>
<rect x="779.6" y="690.9" width="486" height="9.3" fill="#3a3938" />
<rect x="779.6" y="690.9" width="10.2" height="9.3" fill="#4a4948" />
<path d="M786.3,692.8 l-2.8,2.7 l2.8,2.7 z" stroke="none" fill="#c8c8c8" stroke-width="1" />
<rect x="790.2" y="690.9" width="441" height="9.3" fill="#555453" />
<rect x="1256.8" y="690.9" width="8.6" height="9.3" fill="#4a4948" />
<path d="M1259.8,692.8 l2.8,2.7 l-2.8,2.7 z" stroke="none" fill="#c8c8c8" stroke-width="1" />
<path d="M43.2,708.5 a4.6,4.6 0 1,0 4.2,-2.6" stroke="#d0d0d0" fill="none" stroke-width="1" />
<path d="M46.2,706 l1.4,-1.2 M46.2,706 l1.4,1.2" stroke="#d0d0d0" fill="none" stroke-width="0.9" />
<path d="M45.8,710.2 l1.4,1.4 l2.8,-2.8" stroke="#d0d0d0" fill="none" stroke-width="1" />
<rect x="1078" y="704.5" width="26.7" height="14" fill="#4a4948" />
<rect x="1086.6" y="707" width="9.2" height="9" fill="none" stroke="#e0e0e0" stroke-width="1"/>
<line x1="1089.6699999999998" y1="707" x2="1089.6699999999998" y2="716" stroke="#e0e0e0" stroke-width="0.9" />
<line x1="1086.6" y1="710" x2="1095.8" y2="710" stroke="#e0e0e0" stroke-width="0.9" />
<line x1="1092.74" y1="707" x2="1092.74" y2="716" stroke="#e0e0e0" stroke-width="0.9" />
<line x1="1086.6" y1="713" x2="1095.8" y2="713" stroke="#e0e0e0" stroke-width="0.9" />
<rect x="1113.2" y="707" width="9.4" height="9" fill="none" stroke="#d0d0d0" stroke-width="1"/>
<rect x="1115.5" y="708.5" width="4.8" height="6" fill="none" stroke="#d0d0d0" stroke-width="0.9"/>
<path d="M1140.3,707 v9 h9 v-9 h-3 v4 h-3 v-4" stroke="#d0d0d0" fill="none" stroke-width="1" />
<line x1="1162.3" y1="711.5" x2="1167.4" y2="711.5" stroke="#d0d0d0" stroke-width="1" />
<line x1="1170.9" y1="712" x2="1237" y2="712" stroke="#c8c8c8" stroke-width="1" />
<rect x="1202.7" y="708" width="3.4" height="8" fill="#ffffff" />
<path d="M1240.5,711.5 h5.1 M1243,709 v5.1" stroke="#d0d0d0" fill="none" stroke-width="1" />
</svg>
<div class="a" style="left:807.4px;top:234px;width:176.6px;height:37px;background:#2f2e2c;border:1px solid #1e1d1c;border-radius:3px;box-shadow:0 0 0 1px rgba(255,255,255,0.9),0 2px 6px rgba(0,0,0,0.16)"></div>
<div class="a" style="left:807.3px;top:281.5px;width:213.8px;height:354.6px;background:#2f2e2c;border:1px solid #1e1d1c;border-radius:3px;box-shadow:0 0 0 1px rgba(255,255,255,0.9),0 3px 8px rgba(0,0,0,0.16)"></div>
<svg class="ic" width="1280" height="720" viewBox="0 0 1280 720">
<rect x="810.6" y="236.8" width="41.5" height="15" fill="none" stroke="#5a5958" stroke-width="0.9"/>
<rect x="852.7" y="236.8" width="30.6" height="15" fill="none" stroke="#5a5958" stroke-width="0.9"/>
<path d="M846.6999999999999,243.55 L848.4,245.45 L850.1,243.55" stroke="#d0d0d0" fill="none" stroke-width="1.1" stroke-linecap="round"/>
<path d="M877.5,243.55 L879.2,245.45 L880.9000000000001,243.55" stroke="#d0d0d0" fill="none" stroke-width="1.1" stroke-linecap="round"/>
<path d="M886,250 L890.8,240.8 L895.6,250 M887.6,246.8 h6.4" stroke="#d8d8d8" fill="none" stroke-width="1.1" />
<path d="M894.5,242.5 l1,-1 l1,1" stroke="#5a9fd8" fill="none" stroke-width="0.8" />
<path d="M902,250 L906.4,242.4 L910.8,250 M903.3,247.6 h6" stroke="#d8d8d8" fill="none" stroke-width="1.1" />
<path d="M909.5,241.5 l1,1 l1,-1" stroke="#5a9fd8" fill="none" stroke-width="0.8" />
<rect x="914.5" y="240.5" width="9.5" height="6.8" fill="none" stroke="#bdbdbd" stroke-width="0.9"/>
<rect x="919.5" y="244" width="6.5" height="6.5" fill="#e8c86a" rx="1"/>
<path d="M929.8,243.85000000000002 L931.5,245.75 L933.2,243.85000000000002" stroke="#d0d0d0" fill="none" stroke-width="1.1" stroke-linecap="round"/>
<text x="939.2" y="250.5" font-size="12.5" fill="#d0d0d0">%</text>
<text x="953.6" y="248" font-size="6.8" fill="#b0b0b0" textLength="11" lengthAdjust="spacingAndGlyphs">000</text>
<rect x="967.8" y="239.3" width="11" height="11" fill="#2d6fb0" stroke="#6aaee8" stroke-width="0.9"/>
<line x1="967.8" y1="242.5" x2="978.8" y2="242.5" stroke="#6aaee8" stroke-width="0.8"/>
<line x1="967.8" y1="247" x2="978.8" y2="247" stroke="#6aaee8" stroke-width="0.8"/>
<text x="812.6" y="266.3" font-size="11" font-weight="bold" fill="#e0e0e0" textLength="9.5" lengthAdjust="spacingAndGlyphs">Ж</text>
<text x="829" y="266.3" font-size="10.5" font-style="italic" fill="#c8c8c8" textLength="6" lengthAdjust="spacingAndGlyphs">К</text>
<line x1="842.3" y1="256.0" x2="851.2" y2="256.0" stroke="#c8c8c8" stroke-width="0.9"/>
<line x1="842.3" y1="259.3" x2="851.2" y2="259.3" stroke="#c8c8c8" stroke-width="0.9"/>
<line x1="842.3" y1="262.6" x2="851.2" y2="262.6" stroke="#c8c8c8" stroke-width="0.9"/>
<line x1="842.3" y1="265.9" x2="851.2" y2="265.9" stroke="#c8c8c8" stroke-width="0.9"/>
<path d="M857.3,260.5 l3.3,-3.3 l3.3,3.3 l-3.3,3 z" stroke="#d0d0d0" fill="none" stroke-width="0.9" />
<rect x="855.7" y="264.2" width="11" height="2.4" fill="#f4e400" />
<path d="M871.3,259.85 L873,261.75 L874.7,259.85" stroke="#d0d0d0" fill="none" stroke-width="1.1" stroke-linecap="round"/>
<text x="880.4" y="263.3" font-size="10.5" fill="#d0d0d0" textLength="10.5" lengthAdjust="spacingAndGlyphs">A</text>
<rect x="880.2" y="264.2" width="11.8" height="2.4" fill="#e01010" />
<path d="M896.0,259.85 L897.7,261.75 L899.4000000000001,259.85" stroke="#d0d0d0" fill="none" stroke-width="1.1" stroke-linecap="round"/>
<rect x="905.2" y="255.8" width="10.5" height="10.5" fill="none" stroke="#bdbdbd" stroke-width="0.9"/>
<line x1="910.45" y1="255.8" x2="910.45" y2="266.3" stroke="#bdbdbd" stroke-width="0.8"/>
<line x1="905.2" y1="261" x2="915.7" y2="261" stroke="#bdbdbd" stroke-width="0.8"/>
<path d="M920.5,260.05 L922.2,261.95 L923.9000000000001,260.05" stroke="#d0d0d0" fill="none" stroke-width="1.1" stroke-linecap="round"/>
<text x="934.5" y="260.3" font-size="6" fill="#c8c8c8">0</text><text x="931" y="266.3" font-size="6" fill="#c8c8c8">.00</text>
<path d="M935,258.3 h-5 M931.7,256.5 l-1.8,1.8 l1.8,1.8" stroke="#4a9ee0" fill="none" stroke-width="1.1" />
<text x="946.5" y="260.3" font-size="6" fill="#c8c8c8">.00</text><text x="951" y="266.3" font-size="6" fill="#c8c8c8">0</text>
<path d="M944.8,263.8 h5.5 M948.5,262 l1.8,1.8 l-1.8,1.8" stroke="#4a9ee0" fill="none" stroke-width="1.1" />
<path d="M959.8,262 l5,3.8 l3,-3.8 l-5,-3.8 z" stroke="none" fill="#f0b545" stroke-width="1" />
<path d="M964,259 l2.5,-2 l2,1.6 M965.5,261.5 l3.5,-3.8" stroke="#b8b0d0" fill="none" stroke-width="1.1" />
<line x1="830.3" y1="380.6" x2="1020.5" y2="380.6" stroke="#454443" stroke-width="1"/>
<line x1="830.3" y1="402.2" x2="1020.5" y2="402.2" stroke="#454443" stroke-width="1"/>
<line x1="830.3" y1="460" x2="1020.5" y2="460" stroke="#454443" stroke-width="1"/>
<line x1="830.3" y1="518.4" x2="1020.5" y2="518.4" stroke="#454443" stroke-width="1"/>
<line x1="830.3" y1="539" x2="1020.5" y2="539" stroke="#454443" stroke-width="1"/>
<line x1="830.3" y1="559.7" x2="1020.5" y2="559.7" stroke="#454443" stroke-width="1"/>
<path d="M818.5,286.5 L824.3,294.5 M825.3,286.5 L819.5,294.5" stroke="#cfcfcf" fill="none" stroke-width="1.1" />
<circle cx="819" cy="295.5" r="1.5" fill="none" stroke="#3c86c6" stroke-width="1.3"/><circle cx="824.8" cy="295.5" r="1.5" fill="none" stroke="#3c86c6" stroke-width="1.3"/>
<path d="M820,315 h-3.2 v-9.6 h4.2 v1.8" stroke="#cfcfcf" fill="none" stroke-width="1" />
<path d="M821.5,307 h4 l2,2 v6.5 h-6 z" stroke="#cfcfcf" fill="none" stroke-width="1" />
<path d="M819.5,325 h-2 v9 h3.5" stroke="#f0ae3c" fill="none" stroke-width="1.4" />
<path d="M823.2,325 h1.8 v2" stroke="#f0ae3c" fill="none" stroke-width="1.4" />
<rect x="821.8" y="327.8" width="5.8" height="6.5" fill="#2f2e2c" stroke="#cfcfcf" stroke-width="0.9"/>
<rect x="819.3" y="323.8" width="4.2" height="2" fill="#bdbdbd" />
<rect x="834.5" y="344" width="11.5" height="13" fill="#3d6a9a" stroke="#f0ae3c" stroke-width="1.4" rx="1"/>
<rect x="837.8" y="342" width="5" height="3" fill="#bdbdbd" />
<path d="M838.5,357 l8.5,-8.5" stroke="#4aa0e8" fill="none" stroke-width="2" />
<path d="M836,349 h9" stroke="#c04848" fill="none" stroke-width="1" />
<rect x="854.5" y="344" width="11.5" height="13" fill="#3d6a9a" stroke="#f0ae3c" stroke-width="1.4" rx="1"/>
<rect x="857.8" y="342" width="5" height="3" fill="#bdbdbd" />
<circle cx="823.8" cy="389.8" r="3.6" fill="none" stroke="#4a9ee0" stroke-width="1.1"/>
<line x1="821.2" y1="392.6" x2="816.8" y2="396.5" stroke="#4a9ee0" stroke-width="1.3"/>
<line x1="823.8" y1="388" x2="823.8" y2="390.5" stroke="#cfcfcf" stroke-width="0.9"/>
<rect x="816.5" y="467.5" width="11" height="7.5" fill="none" stroke="#6a6a6a" stroke-width="1"/>
<path d="M818.5,471.5 h6 M817.5,465.5 l2,1.5 l2,-2" stroke="#6a6a6a" fill="none" stroke-width="1" />
<path d="M1011,486 l3.5,3.4 l-3.5,3.4" stroke="#d0d0d0" fill="none" stroke-width="1.1" />
<path d="M1011,504.6 l3.5,3.4 l-3.5,3.4" stroke="#d0d0d0" fill="none" stroke-width="1.1" />
<rect x="816.8" y="523" width="10" height="10" fill="none" stroke="#cfcfcf" stroke-width="1"/>
<rect x="816.8" y="523" width="10" height="2.5" fill="#4a9ee0" />
<line x1="816.8" y1="527.5" x2="826.8" y2="527.5" stroke="#cfcfcf" stroke-width="0.8"/>
<line x1="816.8" y1="530" x2="826.8" y2="530" stroke="#cfcfcf" stroke-width="0.8"/>
<line x1="820.2" y1="525.5" x2="820.2" y2="533" stroke="#cfcfcf" stroke-width="0.8"/>
<path d="M818,545.5 h9 v6 h-6 l-3,2.2 v-2.2 h-1.5 z" stroke="#cfcfcf" fill="none" stroke-width="1" />
<path d="M818.5,542.5 v3.8 M816.6,544.4 h3.8" stroke="#4ac060" fill="none" stroke-width="1.1" />
<rect x="818" y="564.6" width="8" height="10" fill="none" stroke="#cfcfcf" stroke-width="1"/>
<line x1="820" y1="567.5" x2="821" y2="567.5" stroke="#cfcfcf" stroke-width="0.9"/>
<line x1="822" y1="567.5" x2="824.5" y2="567.5" stroke="#cfcfcf" stroke-width="0.9"/>
<line x1="820" y1="570.5" x2="821" y2="570.5" stroke="#cfcfcf" stroke-width="0.9"/>
<line x1="822" y1="570.5" x2="824.5" y2="570.5" stroke="#cfcfcf" stroke-width="0.9"/>
<path d="M821.5,621.8 h-2.3 a2.4,2.4 0 0,0 0,4.8 h4.5 a2.4,2.4 0 0,0 1.2,-4.4" stroke="#cfcfcf" fill="none" stroke-width="1" />
<path d="M822.6,628.4 h2.3 a2.4,2.4 0 0,0 0,-4.8 h-4.5 a2.4,2.4 0 0,0 -1.2,4.4" stroke="#cfcfcf" fill="none" stroke-width="1" />
<line x1="839.2" y1="296.8" x2="844.5" y2="296.8" stroke="#d0d0d0" stroke-width="0.8"/>
<line x1="833.4" y1="315.9" x2="838.6" y2="315.9" stroke="#d0d0d0" stroke-width="0.8"/>
<line x1="883.5" y1="375.9" x2="887.3" y2="375.9" stroke="#d0d0d0" stroke-width="0.8"/>
<line x1="833.4" y1="396.6" x2="837.2" y2="396.6" stroke="#d0d0d0" stroke-width="0.8"/>
<line x1="852.2" y1="417.5" x2="856.6" y2="417.5" stroke="#d0d0d0" stroke-width="0.8"/>
<line x1="833.6" y1="436.5" x2="839.5" y2="436.5" stroke="#d0d0d0" stroke-width="0.8"/>
<line x1="874" y1="454.9" x2="880.3" y2="454.9" stroke="#d0d0d0" stroke-width="0.8"/>
<line x1="833.6" y1="494.3" x2="840.3" y2="494.3" stroke="#d0d0d0" stroke-width="0.8"/>
<line x1="833.6" y1="513.1" x2="838.8" y2="513.1" stroke="#d0d0d0" stroke-width="0.8"/>
<line x1="833.4" y1="533.8" x2="839.8" y2="533.8" stroke="#d0d0d0" stroke-width="0.8"/>
<line x1="891.8" y1="554.6" x2="895.8" y2="554.6" stroke="#d0d0d0" stroke-width="0.8"/>
<line x1="864.7" y1="574.6" x2="868.2" y2="574.6" stroke="#d0d0d0" stroke-width="0.8"/>
<line x1="845" y1="593.6" x2="849.1" y2="593.6" stroke="#d0d0d0" stroke-width="0.8"/>
<line x1="869.4" y1="612.2" x2="873.1" y2="612.2" stroke="#d0d0d0" stroke-width="0.8"/>
<line x1="842.7" y1="631" x2="847.2" y2="631" stroke="#d0d0d0" stroke-width="0.8"/>
</svg>
<svg class="txt" width="1280" height="720" viewBox="0 0 1280 720"><defs><clipPath id="shc"><rect x="19" y="152" width="1247" height="534"/></clipPath><clipPath id="tc"><rect x="1239" y="137" width="27" height="15"/></clipPath></defs><text x="240.00" y="14.00" font-size="8.70" fill="#e8e8e8" stroke="#e8e8e8" stroke-width="0.2" textLength="110.52" lengthAdjust="spacingAndGlyphs">Домашний бюджет на месяц1</text><text x="355.68" y="14.00" font-size="8.30" fill="#e8e8e8" stroke="#e8e8e8" stroke-width="0.2" textLength="2.38" lengthAdjust="spacingAndGlyphs">-</text><text x="362.22" y="14.00" font-size="8.70" fill="#e8e8e8" stroke="#e8e8e8" stroke-width="0.2" textLength="18.28" lengthAdjust="spacingAndGlyphs">Excel</text><text x="554.93" y="14.40" font-size="8.70" fill="#e8e8e8" stroke="#e8e8e8" stroke-width="0.35" textLength="23.94" lengthAdjust="spacingAndGlyphs">Поиск</text><text x="1126.12" y="14.10" font-size="7.37" fill="#1a1a1a" textLength="16.92" lengthAdjust="spacingAndGlyphs">Вход</text><text x="9.40" y="36.20" font-size="8.40" fill="#dcdcdc" stroke="#dcdcdc" stroke-width="0.2" textLength="21.19" lengthAdjust="spacingAndGlyphs">Файл</text><text x="49.05" y="36.20" font-size="8.50" fill="#ffffff" font-weight="bold" stroke="#ffffff" stroke-width="0.2" textLength="35.95" lengthAdjust="spacingAndGlyphs">Главная</text><text x="103.12" y="36.20" font-size="8.40" fill="#dcdcdc" stroke="#dcdcdc" stroke-width="0.2" textLength="29.83" lengthAdjust="spacingAndGlyphs">Вставка</text><text x="155.33" y="36.20" font-size="8.40" fill="#dcdcdc" stroke="#dcdcdc" stroke-width="0.2" textLength="77.50" lengthAdjust="spacingAndGlyphs">Разметка страницы</text><text x="255.19" y="36.20" font-size="8.40" fill="#dcdcdc" stroke="#dcdcdc" stroke-width="0.2" textLength="38.16" lengthAdjust="spacingAndGlyphs">Формулы</text><text x="313.60" y="36.20" font-size="8.40" fill="#dcdcdc" stroke="#dcdcdc" stroke-width="0.2" textLength="31.25" lengthAdjust="spacingAndGlyphs">Данные</text><text x="365.61" y="36.20" font-size="8.40" fill="#dcdcdc" stroke="#dcdcdc" stroke-width="0.2" textLength="67.74" lengthAdjust="spacingAndGlyphs">Рецензирование</text><text x="453.04" y="36.20" font-size="8.40" fill="#dcdcdc" stroke="#dcdcdc" stroke-width="0.2" textLength="15.31" lengthAdjust="spacingAndGlyphs">Вид</text><text x="487.60" y="36.20" font-size="8.40" fill="#dcdcdc" stroke="#dcdcdc" stroke-width="0.2" textLength="33.65" lengthAdjust="spacingAndGlyphs">Справка</text><text x="542.06" y="36.20" font-size="8.40" fill="#dcdcdc" stroke="#dcdcdc" stroke-width="0.2" textLength="45.71" lengthAdjust="spacingAndGlyphs">PDFelement</text><text x="1214.97" y="36.20" font-size="8.30" fill="#f0f0f0" font-weight="bold" stroke="#f0f0f0" stroke-width="0.2" textLength="51.01" lengthAdjust="spacingAndGlyphs">Поделиться</text><text x="6.19" y="78.30" font-size="8.40" fill="#e3e3e3" stroke="#e3e3e3" stroke-width="0.2" textLength="32.89" lengthAdjust="spacingAndGlyphs">Вставить</text><text x="54.39" y="56.40" font-size="8.40" fill="#e3e3e3" stroke="#e3e3e3" stroke-width="0.2" textLength="34.90" lengthAdjust="spacingAndGlyphs">Вырезать</text><text x="54.35" y="72.60" font-size="8.40" fill="#e3e3e3" stroke="#e3e3e3" stroke-width="0.2" textLength="44.96" lengthAdjust="spacingAndGlyphs">Копировать</text><text x="54.62" y="89.00" font-size="8.40" fill="#e3e3e3" stroke="#e3e3e3" stroke-width="0.2" textLength="72.88" lengthAdjust="spacingAndGlyphs">Формат по образцу</text><text x="37.11" y="104.50" font-size="8.20" fill="#cfcfcf" stroke="#cfcfcf" stroke-width="0.2" textLength="51.44" lengthAdjust="spacingAndGlyphs">Буфер обмена</text><text x="144.36" y="60.50" font-size="8.64" fill="#d8d8d8" stroke="#d8d8d8" stroke-width="0.2" textLength="52.77" lengthAdjust="spacingAndGlyphs">Malgun Gothic</text><text x="228.04" y="60.50" font-size="8.21" fill="#d8d8d8" stroke="#d8d8d8" stroke-width="0.2" textLength="8.14" lengthAdjust="spacingAndGlyphs">14</text><text x="195.37" y="104.60" font-size="8.20" fill="#cfcfcf" stroke="#cfcfcf" stroke-width="0.2" textLength="26.67" lengthAdjust="spacingAndGlyphs">Шрифт</text><text x="400.78" y="61.60" font-size="8.40" fill="#e3e3e3" stroke="#e3e3e3" stroke-width="0.2" textLength="65.06" lengthAdjust="spacingAndGlyphs">Переносить текст</text><text x="401.03" y="83.00" font-size="8.40" fill="#e3e3e3" stroke="#e3e3e3" stroke-width="0.2" textLength="126.09" lengthAdjust="spacingAndGlyphs">Объединить и поместить в центре</text><text x="386.89" y="104.60" font-size="8.20" fill="#cfcfcf" stroke="#cfcfcf" stroke-width="0.2" textLength="53.83" lengthAdjust="spacingAndGlyphs">Выравнивание</text><text x="554.40" y="62.20" font-size="8.82" fill="#d8d8d8" stroke="#d8d8d8" stroke-width="0.2" textLength="28.10" lengthAdjust="spacingAndGlyphs">Общий</text><text x="582.40" y="104.40" font-size="8.20" fill="#cfcfcf" stroke="#cfcfcf" stroke-width="0.2" textLength="21.90" lengthAdjust="spacingAndGlyphs">Число</text><text x="675.67" y="78.90" font-size="8.40" fill="#e3e3e3" stroke="#e3e3e3" stroke-width="0.2" textLength="36.67" lengthAdjust="spacingAndGlyphs">Условное</text><text x="657.75" y="89.70" font-size="8.40" fill="#e3e3e3" stroke="#e3e3e3" stroke-width="0.2" textLength="65.18" lengthAdjust="spacingAndGlyphs">форматирование</text><text x="732.12" y="78.90" font-size="8.40" fill="#e3e3e3" stroke="#e3e3e3" stroke-width="0.2" textLength="58.78" lengthAdjust="spacingAndGlyphs">Форматировать</text><text x="735.49" y="89.70" font-size="8.40" fill="#e3e3e3" stroke="#e3e3e3" stroke-width="0.2" textLength="44.51" lengthAdjust="spacingAndGlyphs">как таблицу</text><text x="790.63" y="104.50" font-size="8.20" fill="#cfcfcf" stroke="#cfcfcf" stroke-width="0.2" textLength="22.84" lengthAdjust="spacingAndGlyphs">Стили</text><text x="799.20" y="61.00" font-size="10.06" fill="#333333" textLength="47.43" lengthAdjust="spacingAndGlyphs">Обычный</text><text x="869.18" y="61.00" font-size="9.93" fill="#9c5700" textLength="61.76" lengthAdjust="spacingAndGlyphs">Нейтральн...</text><text x="799.20" y="80.00" font-size="9.88" fill="#9c0006" textLength="35.40" lengthAdjust="spacingAndGlyphs">Плохой</text><text x="869.84" y="80.00" font-size="9.92" fill="#006100" textLength="43.77" lengthAdjust="spacingAndGlyphs">Хороший</text><text x="960.09" y="78.70" font-size="8.40" fill="#e3e3e3" stroke="#e3e3e3" stroke-width="0.2" textLength="32.89" lengthAdjust="spacingAndGlyphs">Вставить</text><text x="995.68" y="78.70" font-size="8.40" fill="#e3e3e3" stroke="#e3e3e3" stroke-width="0.2" textLength="29.81" lengthAdjust="spacingAndGlyphs">Удалить</text><text x="1028.42" y="78.70" font-size="8.40" fill="#e3e3e3" stroke="#e3e3e3" stroke-width="0.2" textLength="28.82" lengthAdjust="spacingAndGlyphs">Формат</text><text x="994.91" y="104.30" font-size="8.20" fill="#cfcfcf" stroke="#cfcfcf" stroke-width="0.2" textLength="27.57" lengthAdjust="spacingAndGlyphs">Ячейки</text><text x="1085.00" y="55.70" font-size="8.40" fill="#e3e3e3" stroke="#e3e3e3" stroke-width="0.2" textLength="40.95" lengthAdjust="spacingAndGlyphs">Автосумма</text><text x="1084.75" y="70.60" font-size="8.40" fill="#e3e3e3" stroke="#e3e3e3" stroke-width="0.2" textLength="39.14" lengthAdjust="spacingAndGlyphs">Заполнить</text><text x="1084.62" y="85.60" font-size="8.40" fill="#e3e3e3" stroke="#e3e3e3" stroke-width="0.2" textLength="34.97" lengthAdjust="spacingAndGlyphs">Очистить</text><text x="1142.12" y="78.30" font-size="8.40" fill="#e3e3e3" stroke="#e3e3e3" stroke-width="0.2" textLength="44.63" lengthAdjust="spacingAndGlyphs">Сортировка</text><text x="1143.38" y="88.80" font-size="8.30" fill="#e3e3e3" stroke="#e3e3e3" stroke-width="0.2" textLength="35.25" lengthAdjust="spacingAndGlyphs">и фильтр</text><text x="1196.26" y="78.30" font-size="8.40" fill="#e3e3e3" stroke="#e3e3e3" stroke-width="0.2" textLength="30.22" lengthAdjust="spacingAndGlyphs">Найти и</text><text x="1189.50" y="88.80" font-size="8.30" fill="#e3e3e3" stroke="#e3e3e3" stroke-width="0.2" textLength="35.59" lengthAdjust="spacingAndGlyphs">выделить</text><text x="1121.29" y="104.50" font-size="8.20" fill="#cfcfcf" stroke="#cfcfcf" stroke-width="0.2" textLength="59.32" lengthAdjust="spacingAndGlyphs">Редактирование</text><text x="7.67" y="126.70" font-size="8.92" fill="#d8d8d8" stroke="#d8d8d8" stroke-width="0.2" textLength="9.08" lengthAdjust="spacingAndGlyphs">J3</text><text x="26.40" y="148.80" font-size="9.53" fill="#d0d0d0" stroke="#d0d0d0" stroke-width="0.15">A</text><text x="119.05" y="148.80" font-size="9.53" fill="#d0d0d0" stroke="#d0d0d0" stroke-width="0.15">B</text><text x="261.60" y="148.80" font-size="9.53" fill="#d0d0d0" stroke="#d0d0d0" stroke-width="0.15">C</text><text x="365.65" y="148.80" font-size="9.53" fill="#d0d0d0" stroke="#d0d0d0" stroke-width="0.15">D</text><text x="420.85" y="148.80" font-size="9.53" fill="#d0d0d0" stroke="#d0d0d0" stroke-width="0.15">E</text><text x="491.87" y="148.80" font-size="9.53" fill="#d0d0d0" stroke="#d0d0d0" stroke-width="0.15">F</text><text x="619.83" y="148.80" font-size="9.53" fill="#d0d0d0" stroke="#d0d0d0" stroke-width="0.15">G</text><text x="697.68" y="148.80" font-size="9.53" fill="#d0d0d0" stroke="#d0d0d0" stroke-width="0.15">H</text><text x="734.73" y="148.80" font-size="9.53" fill="#d0d0d0" stroke="#d0d0d0" stroke-width="0.15">I</text><text x="781.24" y="148.80" font-size="9.53" fill="#d0d0d0" stroke="#d0d0d0" stroke-width="0.15">J</text><text x="827.90" y="148.80" font-size="9.53" fill="#d0d0d0" stroke="#d0d0d0" stroke-width="0.15">K</text><text x="876.30" y="148.80" font-size="9.53" fill="#d0d0d0" stroke="#d0d0d0" stroke-width="0.15">L</text><text x="924.08" y="148.80" font-size="9.53" fill="#d0d0d0" stroke="#d0d0d0" stroke-width="0.15">M</text><text x="971.98" y="148.80" font-size="9.53" fill="#d0d0d0" stroke="#d0d0d0" stroke-width="0.15">N</text><text x="1019.68" y="148.80" font-size="9.53" fill="#d0d0d0" stroke="#d0d0d0" stroke-width="0.15">O</text><text x="1068.05" y="148.80" font-size="9.53" fill="#d0d0d0" stroke="#d0d0d0" stroke-width="0.15">P</text><text x="1115.68" y="148.80" font-size="9.53" fill="#d0d0d0" stroke="#d0d0d0" stroke-width="0.15">Q</text><text x="1163.35" y="148.80" font-size="9.53" fill="#d0d0d0" stroke="#d0d0d0" stroke-width="0.15">R</text><text x="1211.97" y="148.80" font-size="9.53" fill="#d0d0d0" stroke="#d0d0d0" stroke-width="0.15">S</text><text clip-path="url(#tc)" x="1260.30" y="148.80" font-size="9.53" fill="#d0d0d0" stroke="#d0d0d0" stroke-width="0.15">T</text><text x="6.60" y="246.30" font-size="10.38" fill="#d8d8d8" stroke="#d8d8d8" stroke-width="0.15">1</text><text x="6.68" y="273.00" font-size="10.38" fill="#d8d8d8" stroke="#d8d8d8" stroke-width="0.15">2</text><text x="6.76" y="285.80" font-size="10.38" fill="#ffffff" stroke="#ffffff" stroke-width="0.15">3</text><text x="6.76" y="313.00" font-size="10.38" fill="#d8d8d8" stroke="#d8d8d8" stroke-width="0.15">4</text><text x="6.76" y="339.30" font-size="10.38" fill="#d8d8d8" stroke="#d8d8d8" stroke-width="0.15">5</text><text x="6.68" y="366.20" font-size="10.38" fill="#d8d8d8" stroke="#d8d8d8" stroke-width="0.15">6</text><text x="6.68" y="392.90" font-size="10.38" fill="#d8d8d8" stroke="#d8d8d8" stroke-width="0.15">7</text><text x="6.76" y="419.60" font-size="10.38" fill="#d8d8d8" stroke="#d8d8d8" stroke-width="0.15">8</text><text x="6.68" y="433.30" font-size="10.38" fill="#d8d8d8" stroke="#d8d8d8" stroke-width="0.15">9</text><text x="3.63" y="460.00" font-size="10.38" fill="#d8d8d8" stroke="#d8d8d8" stroke-width="0.15">10</text><text x="4.10" y="486.80" font-size="10.38" fill="#d8d8d8" stroke="#d8d8d8" stroke-width="0.15">11</text><text x="3.71" y="513.50" font-size="10.38" fill="#d8d8d8" stroke="#d8d8d8" stroke-width="0.15">12</text><text x="3.71" y="540.20" font-size="10.38" fill="#d8d8d8" stroke="#d8d8d8" stroke-width="0.15">13</text><text x="3.63" y="566.80" font-size="10.38" fill="#d8d8d8" stroke="#d8d8d8" stroke-width="0.15">14</text><text x="3.71" y="593.40" font-size="10.38" fill="#d8d8d8" stroke="#d8d8d8" stroke-width="0.15">15</text><text x="3.71" y="620.00" font-size="10.38" fill="#d8d8d8" stroke="#d8d8d8" stroke-width="0.15">16</text><text x="3.71" y="639.30" font-size="10.38" fill="#d8d8d8" stroke="#d8d8d8" stroke-width="0.15">17</text><text x="3.71" y="658.30" font-size="10.38" fill="#d8d8d8" stroke="#d8d8d8" stroke-width="0.15">18</text><text x="3.71" y="677.60" font-size="10.38" fill="#d8d8d8" stroke="#d8d8d8" stroke-width="0.15">19</text><text x="144.88" y="215.20" font-size="38.83" fill="#31693c" textLength="306.35" lengthAdjust="spacingAndGlyphs">ОБЗОР БЮДЖЕТА</text><text x="61.52" y="267.00" font-size="11.90" fill="#1f4527" font-weight="bold" stroke="#1f4527" stroke-width="0.3" textLength="48.20" lengthAdjust="spacingAndGlyphs">Остаток</text><text x="61.56" y="306.90" font-size="10.48" fill="#536157" textLength="133.27" lengthAdjust="spacingAndGlyphs">Запланированный остаток</text><text x="61.38" y="333.60" font-size="10.55" fill="#536157" textLength="106.44" lengthAdjust="spacingAndGlyphs">Фактический остаток</text><text x="61.09" y="360.20" font-size="10.21" fill="#536157" textLength="40.04" lengthAdjust="spacingAndGlyphs">Разница</text><text x="347.10" y="306.70" font-size="10.83" fill="#536157" textLength="37.90" lengthAdjust="spacingAndGlyphs">1 585 ₽</text><text x="347.10" y="333.60" font-size="10.76" fill="#536157" textLength="37.90" lengthAdjust="spacingAndGlyphs">1 740 ₽</text><text x="347.10" y="360.20" font-size="10.77" fill="#536157" textLength="28.19" lengthAdjust="spacingAndGlyphs">155 ₽</text><text x="455.05" y="306.50" font-size="8.62" fill="#4f5b52" textLength="153.26" lengthAdjust="spacingAndGlyphs">Запланированная сумма минус расходы</text><text x="454.91" y="333.20" font-size="8.67" fill="#4f5b52" textLength="134.90" lengthAdjust="spacingAndGlyphs">Фактическая сумма минус расходы</text><text x="454.92" y="360.00" font-size="8.59" fill="#4f5b52" textLength="192.73" lengthAdjust="spacingAndGlyphs">Фактическая сумма минус запланированная сумма</text><text x="60.60" y="414.00" font-size="11.49" fill="#1f4527" font-weight="bold" stroke="#1f4527" stroke-width="0.3" textLength="45.06" lengthAdjust="spacingAndGlyphs">Доходы</text><text x="455.58" y="414.00" font-size="11.55" fill="#1f4527" font-weight="bold" stroke="#1f4527" stroke-width="0.3" textLength="50.58" lengthAdjust="spacingAndGlyphs">Расходы</text><text x="227.65" y="453.40" font-size="9.78" fill="#2d3b30" font-weight="bold" stroke="#2d3b30" stroke-width="0.1" textLength="91.00" lengthAdjust="spacingAndGlyphs">Запланированные</text><text x="346.29" y="453.40" font-size="9.86" fill="#2d3b30" font-weight="bold" stroke="#2d3b30" stroke-width="0.1" textLength="63.96" lengthAdjust="spacingAndGlyphs">Фактические</text><text x="456.15" y="453.40" font-size="9.74" fill="#2d3b30" font-weight="bold" stroke="#2d3b30" stroke-width="0.1" textLength="90.10" lengthAdjust="spacingAndGlyphs">Запланированные</text><text x="576.69" y="453.40" font-size="9.78" fill="#2d3b30" font-weight="bold" stroke="#2d3b30" stroke-width="0.1" textLength="62.96" lengthAdjust="spacingAndGlyphs">Фактические</text><text x="61.40" y="480.30" font-size="11.46" fill="#536157" textLength="41.36" lengthAdjust="spacingAndGlyphs">Доход 1</text><text x="227.06" y="480.30" font-size="11.62" fill="#536157" textLength="38.95" lengthAdjust="spacingAndGlyphs">6 000 ₽</text><text x="346.34" y="480.30" font-size="11.55" fill="#536157" textLength="38.46" lengthAdjust="spacingAndGlyphs">5 800 ₽</text><text x="61.40" y="507.00" font-size="11.46" fill="#536157" textLength="41.36" lengthAdjust="spacingAndGlyphs">Доход 2</text><text x="226.87" y="507.00" font-size="11.65" fill="#536157" textLength="39.13" lengthAdjust="spacingAndGlyphs">1 000 ₽</text><text x="346.16" y="507.00" font-size="11.58" fill="#536157" textLength="38.64" lengthAdjust="spacingAndGlyphs">2 300 ₽</text><text x="61.40" y="533.70" font-size="11.33" fill="#536157" textLength="120.16" lengthAdjust="spacingAndGlyphs">Дополнительный доход</text><text x="227.06" y="533.70" font-size="11.62" fill="#536157" textLength="38.95" lengthAdjust="spacingAndGlyphs">2 500 ₽</text><text x="345.98" y="533.70" font-size="11.60" fill="#536157" textLength="38.83" lengthAdjust="spacingAndGlyphs">1 500 ₽</text><text x="60.89" y="560.40" font-size="11.28" fill="#536157" textLength="68.67" lengthAdjust="spacingAndGlyphs">Общий доход</text><text x="227.24" y="560.40" font-size="11.57" fill="#2d3b30" font-weight="bold" stroke="#2d3b30" stroke-width="0.1" textLength="38.58" lengthAdjust="spacingAndGlyphs">9 500 ₽</text><text x="346.34" y="560.40" font-size="11.52" fill="#2d3b30" font-weight="bold" stroke="#2d3b30" stroke-width="0.1" textLength="38.27" lengthAdjust="spacingAndGlyphs">9 600 ₽</text><text x="455.75" y="480.10" font-size="11.46" fill="#536157" textLength="39.26" lengthAdjust="spacingAndGlyphs">7 915 ₽</text><text x="576.46" y="480.10" font-size="11.41" fill="#536157" textLength="38.95" lengthAdjust="spacingAndGlyphs">7 860 ₽</text><text x="60.46" y="613.90" font-size="12.08" fill="#1f4527" font-weight="bold" stroke="#1f4527" stroke-width="0.3" textLength="212.14" lengthAdjust="spacingAndGlyphs">Разбивка по фактическим расходам</text><text clip-path="url(#shc)" x="152.00" y="653.50" font-size="8.53" fill="#595959" textLength="25.02" lengthAdjust="spacingAndGlyphs">Жилье</text><text clip-path="url(#shc)" x="137.57" y="670.00" font-size="8.62" fill="#595959" textLength="39.17" lengthAdjust="spacingAndGlyphs">Транспорт</text><text clip-path="url(#shc)" x="163.64" y="687.00" font-size="8.19" fill="#595959" textLength="13.02" lengthAdjust="spacingAndGlyphs">Еда</text><text clip-path="url(#shc)" x="574.72" y="654.00" font-size="8.64" fill="#595959" textLength="12.59" lengthAdjust="spacingAndGlyphs">3 ₽</text><text clip-path="url(#shc)" x="386.14" y="670.50" font-size="8.67" fill="#595959" textLength="12.67" lengthAdjust="spacingAndGlyphs">1 ₽</text><text clip-path="url(#shc)" x="377.73" y="687.50" font-size="8.78" fill="#595959" textLength="12.99" lengthAdjust="spacingAndGlyphs">1 ₽</text><text x="811.32" y="247.30" font-size="8.68" fill="#d8d8d8" stroke="#d8d8d8" stroke-width="0.2" textLength="28.47" lengthAdjust="spacingAndGlyphs">Malgun</text><text x="854.51" y="247.30" font-size="8.24" fill="#d8d8d8" stroke="#d8d8d8" stroke-width="0.2" textLength="8.68" lengthAdjust="spacingAndGlyphs">14</text><text x="832.69" y="295.50" font-size="8.30" fill="#f0f0f0" stroke="#f0f0f0" stroke-width="0.2" textLength="35.00" lengthAdjust="spacingAndGlyphs">Вырезать</text><text x="832.66" y="314.60" font-size="8.30" fill="#f0f0f0" stroke="#f0f0f0" stroke-width="0.2" textLength="44.04" lengthAdjust="spacingAndGlyphs">Копировать</text><text x="833.41" y="334.40" font-size="8.30" fill="#f0f0f0" font-weight="bold" stroke="#f0f0f0" stroke-width="0.2" textLength="80.04" lengthAdjust="spacingAndGlyphs">Параметры вставки:</text><text x="832.94" y="374.60" font-size="8.30" fill="#f0f0f0" stroke="#f0f0f0" stroke-width="0.2" textLength="84.97" lengthAdjust="spacingAndGlyphs">Специальная вставка...</text><text x="832.67" y="395.30" font-size="8.30" fill="#f0f0f0" stroke="#f0f0f0" stroke-width="0.2" textLength="94.81" lengthAdjust="spacingAndGlyphs">Интеллектуальный поиск</text><text x="833.00" y="416.20" font-size="8.30" fill="#f0f0f0" stroke="#f0f0f0" stroke-width="0.2" textLength="38.68" lengthAdjust="spacingAndGlyphs">Вставить...</text><text x="833.48" y="435.20" font-size="8.30" fill="#f0f0f0" stroke="#f0f0f0" stroke-width="0.2" textLength="35.51" lengthAdjust="spacingAndGlyphs">Удалить...</text><text x="833.22" y="453.60" font-size="8.30" fill="#f0f0f0" stroke="#f0f0f0" stroke-width="0.2" textLength="83.91" lengthAdjust="spacingAndGlyphs">Очистить содержимое</text><text x="833.23" y="474.40" font-size="8.30" fill="#6e6e6e" stroke="#6e6e6e" stroke-width="0.2" textLength="63.17" lengthAdjust="spacingAndGlyphs">Экспресс-анализ</text><text x="833.21" y="493.00" font-size="8.30" fill="#f0f0f0" stroke="#f0f0f0" stroke-width="0.2" textLength="27.82" lengthAdjust="spacingAndGlyphs">Фильтр</text><text x="833.22" y="511.80" font-size="8.30" fill="#f0f0f0" stroke="#f0f0f0" stroke-width="0.2" textLength="44.03" lengthAdjust="spacingAndGlyphs">Сортировка</text><text x="832.78" y="532.60" font-size="8.30" fill="#f0f0f0" stroke="#f0f0f0" stroke-width="0.2" textLength="172.64" lengthAdjust="spacingAndGlyphs">Получить данные из таблицы или диапазона...</text><text x="832.78" y="553.20" font-size="8.30" fill="#f0f0f0" stroke="#f0f0f0" stroke-width="0.2" textLength="80.95" lengthAdjust="spacingAndGlyphs">Вставить примечание</text><text x="833.02" y="573.20" font-size="8.30" fill="#f0f0f0" stroke="#f0f0f0" stroke-width="0.2" textLength="58.61" lengthAdjust="spacingAndGlyphs">Формат ячеек...</text><text x="832.77" y="592.20" font-size="8.30" fill="#f0f0f0" stroke="#f0f0f0" stroke-width="0.2" textLength="147.56" lengthAdjust="spacingAndGlyphs">Выбрать из раскрывающегося списка...</text><text x="832.76" y="610.80" font-size="8.30" fill="#f0f0f0" stroke="#f0f0f0" stroke-width="0.2" textLength="63.97" lengthAdjust="spacingAndGlyphs">Присвоить имя...</text><text x="833.03" y="629.60" font-size="8.30" fill="#f0f0f0" stroke="#f0f0f0" stroke-width="0.2" textLength="27.92" lengthAdjust="spacingAndGlyphs">Ссылка</text><text x="74.93" y="698.20" font-size="8.68" fill="#2f7040" font-weight="bold" stroke="#2f7040" stroke-width="0.2" textLength="67.22" lengthAdjust="spacingAndGlyphs">Обзор бюджета</text><text x="162.09" y="698.20" font-size="8.68" fill="#ffffff" stroke="#ffffff" stroke-width="0.2" textLength="69.55" lengthAdjust="spacingAndGlyphs">Сводный бюджет</text><text x="251.93" y="698.20" font-size="8.63" fill="#1e1e1e" stroke="#1e1e1e" stroke-width="0.2" textLength="72.46" lengthAdjust="spacingAndGlyphs">Расходы за месяц</text><text x="347.00" y="698.20" font-size="8.63" fill="#1e1e1e" stroke="#1e1e1e" stroke-width="0.2" textLength="100.55" lengthAdjust="spacingAndGlyphs">Дополнительные данные</text><text x="4.36" y="715.60" font-size="7.63" fill="#d8d8d8" stroke="#d8d8d8" stroke-width="0.2" textLength="25.17" lengthAdjust="spacingAndGlyphs">Готово</text><text x="53.44" y="716.00" font-size="7.71" fill="#d8d8d8" stroke="#d8d8d8" stroke-width="0.2" textLength="153.08" lengthAdjust="spacingAndGlyphs">Специальные возможности: все в порядке</text><text x="1254.55" y="715.00" font-size="7.31" fill="#d8d8d8" stroke="#d8d8d8" stroke-width="0.2" textLength="20.47" lengthAdjust="spacingAndGlyphs">100 %</text></svg></body></html>
